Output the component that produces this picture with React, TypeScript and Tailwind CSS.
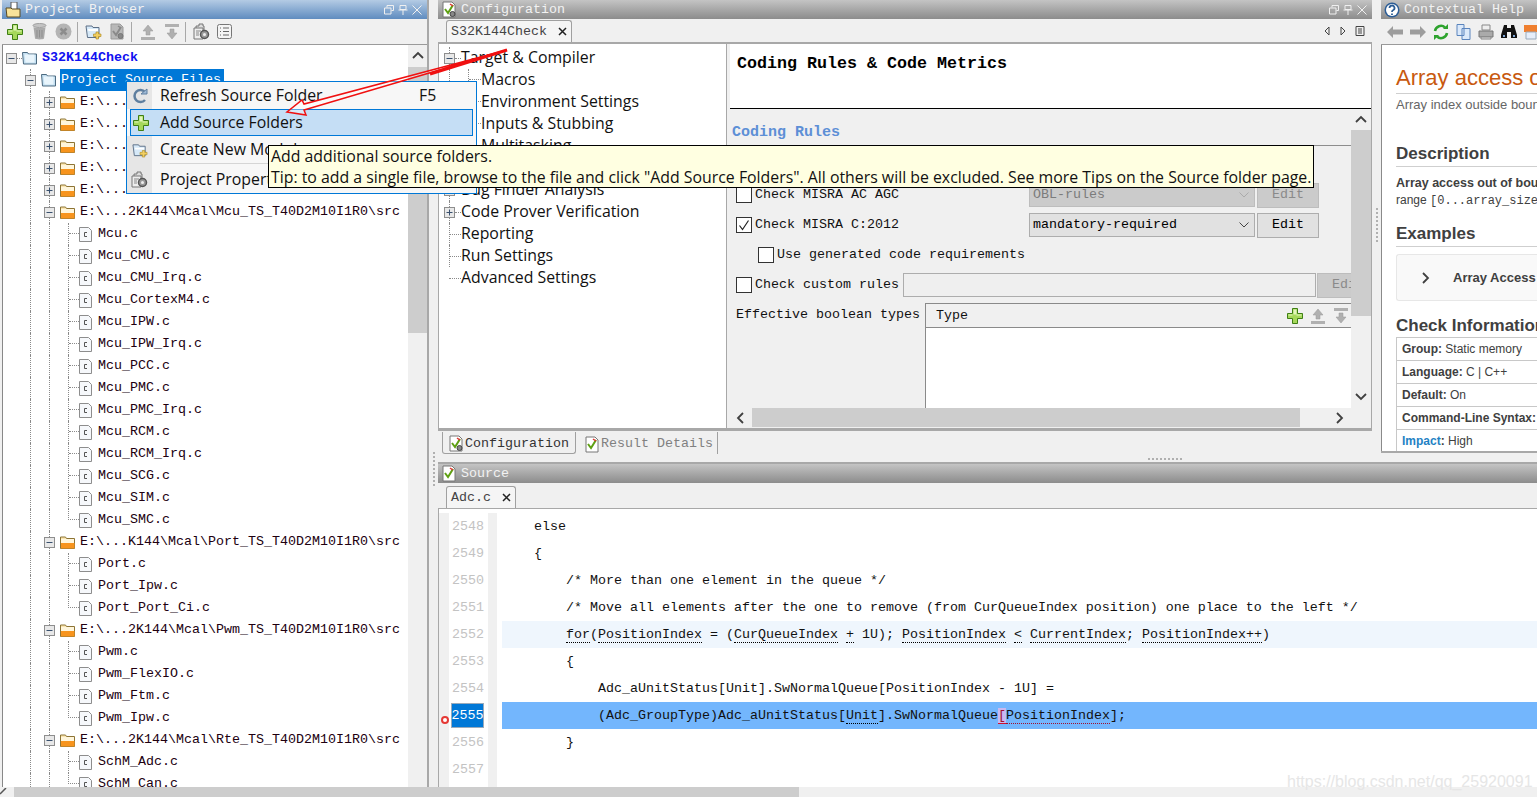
import React from "react";

const GUIDE = "border-dotted border-[#8a8a8a]";

const Plus = ({ s = 16 }: { s?: number }) => (
  <svg width={s} height={s} viewBox="0 0 16 16" className="shrink-0">
    <path d="M5.500 .5h5v5h5v5h-5v5h-5v-5h-5v-5h5z" fill="#a5d85a" stroke="#3f7f14" />
    <path d="M6.500 1.500h3v5h5v1h-5v-1h-3zM1.500 6.500h4v1h-4z" fill="#e2f5bd" />
  </svg>
);

const Trash = () => (
  <svg width="15" height="17" viewBox="0 0 15 17" className="shrink-0">
    <ellipse cx="7.500" cy="2.500" rx="6.500" ry="2" fill="#c4c4c4" stroke="#a0a0a0" />
    <path d="M1.500 4l1.500 11.500c1.500 1.200 7.500 1.200 9 0L13.500 4c-2 1.200-10 1.200-12 0z" fill="#aaa" />
    <path d="M5 7v7.500M7.500 7v7.500M10 7v7.500" stroke="#8f8f8f" />
  </svg>
);

const Cancel = () => (
  <svg width="17" height="17" viewBox="0 0 17 17" className="shrink-0">
    <circle cx="8.500" cy="8.500" r="8" fill="#b4b4b4" />
    <path d="M5.500 5.500l6 6M11.500 5.500l-6 6" stroke="#8c8c8c" strokeWidth="2.500" />
  </svg>
);

const FolderAdd = ({ s = 17 }: { s?: number }) => (
  <svg width={s} height={s} viewBox="0 0 17 17" className="shrink-0">
    <path d="M1 3h6l1 1.500h6v10H2.500z" fill="#d6e9f8" stroke="#5c6f86" />
    <path d="M3 6h10v2H3.500z" fill="#fff" />
    <path d="M11 9h2.500v2H16v2.500h-2.500V16H11v-2.500H8.500V11H11z" fill="#f2cf62" stroke="#a98519" strokeWidth=".6" />
  </svg>
);

const CheckDoc = ({ gray = false, gear = false }: { gray?: boolean; gear?: boolean }) => (
  <svg width="14" height="17" viewBox="0 0 14 17" className="shrink-0">
    <path d="M1 1h9l3 3v12H1z" fill={gray ? "#b8b8b8" : "#fff"} stroke={gray ? "#9a9a9a" : "#777"} />
    <path d="M3 8l3 4 5-8" fill="none" stroke={gray ? "#8a8a8a" : "#5ea012"} strokeWidth="2" />
    <path d="M8 3l3 2" stroke={gray ? "#8a8a8a" : "#d33"} strokeWidth="1.500" />
    {(gear || gray) && <circle cx="10.500" cy="13" r="2.500" fill="#888" stroke={gray ? "#777" : "#444"} />}
  </svg>
);

const ArrowUp = ({ s = 16 }: { s?: number }) => (
  <svg width={s} height={s} viewBox="0 0 16 16" className="shrink-0">
    <path d="M8 1l5 6h-3v4H6V7H3z" fill="#b0b0b0" stroke="#999" strokeWidth=".5" />
    <path d="M1 13h14v3H1z" fill="#b0b0b0" />
  </svg>
);

const ArrowDown = ({ s = 16 }: { s?: number }) => (
  <svg width={s} height={s} viewBox="0 0 16 16" className="shrink-0">
    <path d="M1 0h14v3H1z" fill="#b0b0b0" />
    <path d="M6 5h4v4h3l-5 6-5-6h3z" fill="#b0b0b0" stroke="#999" strokeWidth=".5" />
  </svg>
);

const GearDoc = () => (
  <svg width="17" height="17" viewBox="0 0 17 17" className="shrink-0">
    <path d="M3 3h3v-2h4v2h1v5H3z" fill="#ddd" stroke="#777" />
    <path d="M1 5h9v11H1z" fill="#eee" stroke="#777" />
    <path d="M3 8h5M3 10h3M3 12h3" stroke="#888" />
    <circle cx="11.500" cy="11.500" r="4" fill="#999" stroke="#555" strokeWidth="1.500" />
    <circle cx="11.500" cy="11.500" r="1.500" fill="#eee" />
  </svg>
);

const ListBox = () => (
  <svg width="15" height="15" viewBox="0 0 15 15" className="shrink-0">
    <rect x=".5" y=".5" width="14" height="14" rx="2" fill="#f4f4f4" stroke="#777" />
    <path d="M3 4h1M6 4h6M3 7.500h1M6 7.500h6M3 11h1M6 11h6" stroke="#666" />
  </svg>
);

const Sep = ({ className = "" }: { className?: string }) => (
  <span className={`h-[20px] w-px shrink-0 bg-[#a8a8a8] ${className}`} />
);

const ProjectFolder = () => (
  <svg width="15" height="14" viewBox="0 0 15 14" className="shrink-0">
    <path d="M.5 1.500h5l1 1.500h8v10h-13z" fill="#c4e0f2" stroke="#4c6a80" />
    <path d="M2.500 3.500h10v8h-9z" fill="#e9f5fc" />
  </svg>
);

const OpenFolder = () => (
  <svg width="15" height="13" viewBox="0 0 15 13" className="shrink-0">
    <path d="M.5 1h5l1 1.500h8v10H.500z" fill="#fbe6b0" stroke="#8d7434" />
    <path d="M1 7h13.500v5.500H1z" fill="#f7941d" />
    <path d="M1 3h13v4H1z" fill="#fff6dc" />
  </svg>
);

const FileC = () => (
  <svg width="13" height="15" viewBox="0 0 13 15" className="shrink-0">
    <path d="M.5 .5h9l3 3v11H.500z" fill="#f6f8fb" stroke="#8d8d8d" />
    <path d="M8 5.500H5.500v4H8" fill="none" stroke="#555" />
  </svg>
);

const Expander = ({ open = false, className = "" }: { open?: boolean; className?: string }) => (
  <svg width="11" height="11" viewBox="0 0 11 11" className={`shrink-0 ${className}`}>
    <rect x=".5" y=".5" width="10" height="10" fill="#e8e8e8" stroke="#8e8e8e" />
    <path d="M2.500 5.500h6" stroke="#39506e" />
    {!open && <path d="M5.500 2.500v6" stroke="#39506e" />}
  </svg>
);

const Chevron = ({ dir, className = "" }: { dir: "up" | "down" | "left" | "right"; className?: string }) => {
  const d = {
    up: "M2 9l5-5 5 5",
    down: "M2 5l5 5 5-5",
    left: "M9 2L4 7l5 5",
    right: "M5 2l5 5-5 5",
  }[dir];
  return (
    <svg width="14" height="14" viewBox="0 0 14 14" className={`shrink-0 ${className}`}>
      <path d={d} fill="none" stroke="#404040" strokeWidth="1.800" />
    </svg>
  );
};

const PaneButtons = () => (
  <span className="flex items-center gap-[4px] pr-[5px]">
    <svg width="10" height="10" viewBox="0 0 10 10">
      <path d="M3 2.500V.5h6.500v5H7.500M.5 3h6.500v6H.500z" fill="none" stroke="#f0f0f0" />
    </svg>
    <svg width="10" height="10" viewBox="0 0 10 10">
      <path d="M2 .5h6v4H2zM.5 5h9M5 5v5" fill="none" stroke="#f0f0f0" />
    </svg>
    <svg width="10" height="10" viewBox="0 0 10 10">
      <path d="M.5 .5l9 9M9.500 .5l-9 9" stroke="#f0f0f0" />
    </svg>
  </span>
);

const TitleBar = ({
  icon,
  title,
  buttons = true,
  active = false,
}: {
  icon: React.ReactNode;
  title: string;
  buttons?: boolean;
  active?: boolean;
}) => (
  <div
    className={`flex h-[19px] shrink-0 items-center justify-between bg-gradient-to-b ${
      active ? "from-[#b4cbe4] to-[#5f8cbf]" : "from-[#c4c4c4] to-[#8c8c8c]"
    }`}
  >
    <div className="flex items-center gap-[4px] pl-[3px] text-[13.33px] text-[#f2f2f2]">
      <span className="flex w-[16px] justify-center">{icon}</span>
      <span>{title}</span>
    </div>
    {buttons && <PaneButtons />}
  </div>
);

type Row =
  | { kind: "dir"; path: string; open?: boolean }
  | { kind: "file"; name: string; last?: boolean };

const files = (names: string[]): Row[] =>
  names.map((name, i) => ({ kind: "file", name, last: i === names.length - 1 }));

const treeRows: Row[] = [
  { kind: "dir", path: "E:\\..." },
  { kind: "dir", path: "E:\\..." },
  { kind: "dir", path: "E:\\..." },
  { kind: "dir", path: "E:\\..." },
  { kind: "dir", path: "E:\\..." },
  { kind: "dir", path: "E:\\...2K144\\Mcal\\Mcu_TS_T40D2M10I1R0\\src", open: true },
  ...files([
    "Mcu.c",
    "Mcu_CMU.c",
    "Mcu_CMU_Irq.c",
    "Mcu_CortexM4.c",
    "Mcu_IPW.c",
    "Mcu_IPW_Irq.c",
    "Mcu_PCC.c",
    "Mcu_PMC.c",
    "Mcu_PMC_Irq.c",
    "Mcu_RCM.c",
    "Mcu_RCM_Irq.c",
    "Mcu_SCG.c",
    "Mcu_SIM.c",
    "Mcu_SMC.c",
  ]),
  { kind: "dir", path: "E:\\...K144\\Mcal\\Port_TS_T40D2M10I1R0\\src", open: true },
  ...files(["Port.c", "Port_Ipw.c", "Port_Port_Ci.c"]),
  { kind: "dir", path: "E:\\...2K144\\Mcal\\Pwm_TS_T40D2M10I1R0\\src", open: true },
  ...files(["Pwm.c", "Pwm_FlexIO.c", "Pwm_Ftm.c", "Pwm_Ipw.c"]),
  { kind: "dir", path: "E:\\...2K144\\Mcal\\Rte_TS_T40D2M10I1R0\\src", open: true },
  ...files(["SchM_Adc.c", "SchM_Can.c"]),
];

const Guide = ({ w = "w-[19px]" }: { w?: string }) => (
  <span className={`h-full shrink-0 border-l ${GUIDE} ${w}`} />
);

const ProjectTreeRow = ({ row }: { row: Row }) => (
  <div className="flex h-[22px] shrink-0 items-center pl-[27px] text-[13.33px] text-[#200010] whitespace-nowrap">
    <Guide />
    {row.kind === "dir" ? (
      <>
        <span className={`relative flex h-full w-[11px] shrink-0 items-center border-l ${GUIDE}`}>
          <Expander open={row.open} className="absolute left-[-6px]" />
        </span>
        <OpenFolder />
        <span className="ml-[5px]">{row.path}</span>
      </>
    ) : (
      <>
        <Guide />
        {row.last ? (
          <span className={`h-[11px] w-[11px] shrink-0 self-start border-b border-l ${GUIDE}`} />
        ) : (
          <span className={`h-full w-[11px] shrink-0 border-l ${GUIDE}`}>
            <span className={`mt-[10px] block border-t ${GUIDE}`} />
          </span>
        )}
        <FileC />
        <span className="ml-[6px]">{row.name}</span>
      </>
    )}
  </div>
);

const ProjectBrowser = () => (
  <div className="flex h-full w-[429px] shrink-0 flex-col border-r-2 border-[#a8a8a8] pl-[2px]">
    <TitleBar
      active
      icon={
        <svg width="16" height="16" viewBox="0 0 16 16">
          <path d="M6 0h6v10H6z" fill="#fff" stroke="#555" />
          <path d="M1 6h5l1 1h8v8H2z" fill="#f8e39a" stroke="#5a4a20" />
        </svg>
      }
      title="Project Browser"
    />
    <div className="flex h-[26px] shrink-0 items-center border-b border-[#9a9a9a] bg-[#f0f0f0] pl-[5px]">
      <Plus />
      <span className="ml-[9px]">
        <Trash />
      </span>
      <span className="ml-[8px]">
        <Cancel />
      </span>
      <Sep className="ml-[5px]" />
      <span className="ml-[7px]">
        <FolderAdd />
      </span>
      <span className="ml-[8px]">
        <CheckDoc gray />
      </span>
      <Sep className="ml-[7px]" />
      <span className="ml-[8px]">
        <ArrowUp />
      </span>
      <span className="ml-[8px]">
        <ArrowDown />
      </span>
      <Sep className="ml-[5px]" />
      <span className="ml-[7px]">
        <GearDoc />
      </span>
      <span className="ml-[7px]">
        <ListBox />
      </span>
    </div>
    <div className="flex min-h-0 flex-1 border-l border-[#888]">
      <div className="flex min-w-0 flex-1 flex-col overflow-hidden bg-white pt-[2px]">
        <div className="flex h-[22px] shrink-0 items-center pl-[3px]">
          <Expander open />
          <span className={`w-[5px] border-t ${GUIDE}`} />
          <ProjectFolder />
          <span className="ml-[5px] text-[13.33px] font-bold text-[#1010f0]">S32K144Check</span>
        </div>
        <div className="flex h-[22px] shrink-0 items-center pl-[27px]">
          <span className={`relative flex h-full w-[11px] shrink-0 items-center border-l ${GUIDE}`}>
            <Expander open className="absolute left-[-6px]" />
          </span>
          <ProjectFolder />
          <span className="ml-[4px] bg-[#0078d7] pl-px pr-[3px] text-[13.33px] leading-[22px] text-white">
            Project Source Files
          </span>
        </div>
        {treeRows.map((row, i) => (
          <ProjectTreeRow key={i} row={row} />
        ))}
      </div>
      <div className="flex w-[19px] shrink-0 flex-col items-center bg-[#f0f0f0]">
        <div className="flex h-[22px] items-center">
          <Chevron dir="up" />
        </div>
        <div className="h-[266px] w-full bg-[#cdcdcd]" />
      </div>
    </div>
  </div>
);

const configTree: { label: string; level: number; expander?: "plus" | "minus" }[] = [
  { label: "Target & Compiler", level: 0, expander: "minus" },
  { label: "Macros", level: 1 },
  { label: "Environment Settings", level: 1 },
  { label: "Inputs & Stubbing", level: 1 },
  { label: "Multitasking", level: 1 },
  { label: "Coding Rules & Code Metrics", level: 0 },
  { label: "Bug Finder Analysis", level: 0, expander: "plus" },
  { label: "Code Prover Verification", level: 0, expander: "plus" },
  { label: "Reporting", level: 0 },
  { label: "Run Settings", level: 0 },
  { label: "Advanced Settings", level: 0 },
];

const ConfigTree = () => (
  <div className="w-[287px] shrink-0 bg-white pt-[3px] font-['Open_Sans',sans-serif] text-[15.85px] text-[#111]">
    {configTree.map((item, i) => (
      <div key={item.label} className="flex h-[22px] items-center pl-[10px] whitespace-nowrap">
        <span className={`relative flex h-full shrink-0 items-center ${item.level ? "w-[19px]" : "w-[12px]"} ${i < 10 ? `border-l ${GUIDE}` : ""}`}>
          {item.expander && <Expander open={item.expander === "minus"} className="absolute left-[-6px] bg-white" />}
          {!item.expander && !item.level && <span className={`w-full border-t ${GUIDE}`} />}
          {item.expander && <span className={`ml-[5px] w-full border-t ${GUIDE}`} />}
        </span>
        {item.level === 1 && (
          <span className={`h-full w-[13px] shrink-0 border-l ${GUIDE}`}>
            <span className={`mt-[10px] block border-t ${GUIDE}`} />
          </span>
        )}
        <span>{item.label}</span>
      </div>
    ))}
  </div>
);

const Checkbox = ({ checked = false }: { checked?: boolean }) => (
  <span className="flex h-[16px] w-[16px] shrink-0 items-center justify-center border border-[#333] bg-white">
    {checked && (
      <svg width="12" height="12" viewBox="0 0 12 12">
        <path d="M1.500 6.500l3 4 6-9" fill="none" stroke="#222" strokeWidth="1.200" />
      </svg>
    )}
  </span>
);

const Select = ({ value, disabled = false }: { value: string; disabled?: boolean }) => (
  <div
    className={`flex h-[24px] w-[226px] shrink-0 items-center justify-between border pl-[3px] pr-[4px] ${
      disabled ? "border-[#bdbdbd] bg-[#cbcbcb] text-[#7c7c7c]" : "border-[#adadad] bg-[#e1e1e1] text-black"
    }`}
  >
    <span>{value}</span>
    <svg width="12" height="8" viewBox="0 0 12 8">
      <path d="M1.500 1.500L6 6l4.500-4.500" fill="none" stroke={disabled ? "#aaa" : "#444"} />
    </svg>
  </div>
);

const EditBtn = ({ disabled = false }: { disabled?: boolean }) => (
  <div
    className={`ml-[2px] flex h-[25px] w-[62px] shrink-0 items-center justify-center border ${
      disabled ? "border-[#bdbdbd] bg-[#cbcbcb] text-[#8a8a8a]" : "border-[#adadad] bg-[#e1e1e1] text-black"
    }`}
  >
    Edit
  </div>
);

const OptionsPane = () => (
  <div className="flex min-h-0 flex-1 flex-col pb-px">
    <div className="flex min-h-0 flex-1">
      <div className="min-w-0 flex-1 overflow-hidden bg-[#f0f0f0] text-[13.33px] text-[#111] whitespace-nowrap">
        <div className="h-[36px] pl-[2px] pt-[14px] text-[15px] font-bold leading-[20px] text-[#5d8fd6]">Coding Rules</div>
        <div className="mb-[34px] border-b border-[#8d8d8d]" />
        <div className="flex h-[30px] items-center pl-[6px]">
          <Checkbox />
          <span className="ml-[3px] w-[274px] shrink-0">Check MISRA AC AGC</span>
          <Select value="OBL-rules" disabled />
          <EditBtn disabled />
        </div>
        <div className="flex h-[30px] items-center pl-[6px]">
          <Checkbox checked />
          <span className="ml-[3px] w-[274px] shrink-0">Check MISRA C:2012</span>
          <Select value="mandatory-required" />
          <EditBtn />
        </div>
        <div className="flex h-[30px] items-center pl-[28px]">
          <Checkbox />
          <span className="ml-[3px]">Use generated code requirements</span>
        </div>
        <div className="flex h-[30px] items-center pl-[6px]">
          <Checkbox />
          <span className="ml-[3px] w-[148px] shrink-0">Check custom rules</span>
          <div className="h-[24px] w-[413px] shrink-0 border border-[#adadad] bg-[#efefef]" />
          <div className="ml-px flex h-[25px] w-[62px] shrink-0 items-center justify-center border border-[#bdbdbd] bg-[#cbcbcb] text-[#8a8a8a]">
            Edit
          </div>
        </div>
        <div className="flex pl-[6px] pt-[3px]">
          <span className="w-[189px] shrink-0 pt-[2px]">Effective boolean types</span>
          <div className="h-[106px] min-w-0 flex-1 border-l border-t border-[#8a8a8a] bg-white">
            <div className="flex h-[24px] items-center justify-between border-b border-[#8a8a8a] bg-[#f0f0f0] pl-[10px]">
              <span>Type</span>
              <span className="flex items-center gap-[7px] pr-[2px]">
                <Plus />
                <ArrowUp />
                <ArrowDown />
              </span>
            </div>
          </div>
        </div>
      </div>
      <div className="flex w-[20px] shrink-0 flex-col items-center bg-[#f0f0f0]">
        <div className="flex h-[21px] items-center">
          <Chevron dir="up" />
        </div>
        <div className="h-[186px] w-full bg-[#cdcdcd]" />
        <div className="flex-1" />
        <div className="flex h-[24px] items-center">
          <Chevron dir="down" />
        </div>
      </div>
    </div>
    <div className="flex h-[19px] shrink-0 items-center bg-[#f0f0f0]">
      <div className="flex w-[22px] justify-center">
        <Chevron dir="left" />
      </div>
      <div className="h-full w-[548px] bg-[#cdcdcd]" />
      <div className="ml-[31px] flex w-[16px] justify-center">
        <Chevron dir="right" />
      </div>
    </div>
  </div>
);

const DocTab = ({ label, w }: { label: string; w: string }) => (
  <div className={`flex h-[22px] items-center justify-between rounded-t-[3px] border border-b-0 border-[#a0a0a0] bg-[#f5f5f5] pl-[4px] pr-[4px] text-[13.33px] text-[#444] ${w}`}>
    <span>{label}</span>
    <svg width="9" height="9" viewBox="0 0 9 9">
      <path d="M1 1l7 7M8 1l-7 7" stroke="#222" strokeWidth="1.500" />
    </svg>
  </div>
);

const Configuration = () => (
  <div className="flex h-full w-[934px] shrink-0 flex-col">
    <TitleBar icon={<CheckDoc gear />} title="Configuration" />
    <div className="flex h-[25px] shrink-0 items-end justify-between border-b-2 border-[#a8a8a8] bg-[#f0f0f0] pl-[8px]">
      <DocTab label="S32K144Check" w="w-[126px]" />
      <div className="flex items-center gap-[8px] self-center pr-[7px]">
        <svg width="8" height="10" viewBox="0 0 8 10">
          <path d="M6 1L2 5l4 4z" fill="none" stroke="#444" />
        </svg>
        <svg width="8" height="10" viewBox="0 0 8 10">
          <path d="M2 1l4 4-4 4z" fill="none" stroke="#444" />
        </svg>
        <svg width="10" height="10" viewBox="0 0 10 10">
          <path d="M1 .5h8v9H1zM3 3h4M3 5h4M3 7h4" fill="none" stroke="#444" />
        </svg>
      </div>
    </div>
    <div className="flex h-[387px] shrink-0 border-x border-b-[3px] border-[#a8a8a8] bg-[#b8b8b8]">
      <ConfigTree />
      <div className="flex min-w-0 flex-1 flex-col border-l border-[#a8a8a8] bg-[#f0f0f0] pl-[3px]">
        <div className="h-[65px] shrink-0 border-b border-black bg-white pl-[7px] pt-[7px] text-[16.67px] font-bold text-black">
          Coding Rules &amp; Code Metrics
        </div>
        <OptionsPane />
      </div>
    </div>
    <div className="flex flex-1 items-start bg-[#f0f0f0] pl-[4px] pt-px text-[13.33px]">
      <div className="flex h-[22px] w-[134px] items-center gap-[2px] rounded-b-[3px] border border-t-0 border-[#a0a0a0] pl-[6px] pt-[2px] text-[#333]">
        <CheckDoc gear />
        Configuration
      </div>
      <div className="ml-[8px] flex h-[22px] w-[134px] items-center gap-[2px] border-r border-[#a0a0a0] pl-[1px] pt-[2px] text-[#808080]">
        <CheckDoc />
        Result Details
      </div>
    </div>
  </div>
);

const helpCells: React.ReactNode[] = [
  <span><b>Group:</b> Static memory</span>,
  <span><b>Language:</b> C | C++</span>,
  <span><b>Default:</b> On</span>,
  <span><b>Command-Line Syntax:</b></span>,
  <span><b className="text-[#1f82c4]">Impact</b><b>:</b> High</span>,
];

const ContextualHelp = () => (
  <div className="flex h-[453px] min-w-0 flex-1 flex-col border-b-2 border-[#a8a8a8]">
    <TitleBar
      icon={
        <svg width="16" height="16" viewBox="0 0 16 16">
          <circle cx="8" cy="8" r="7.500" fill="#2c5d96" />
          <circle cx="8" cy="8" r="6" fill="#fff" />
          <path d="M5.500 6a2.500 2.500 0 1 1 3.500 2.300c-.7.3-1 .7-1 1.700M8 11.500v1.500" fill="none" stroke="#2c5d96" strokeWidth="1.800" />
        </svg>
      }
      title="Contextual Help"
      buttons={false}
    />
    <div className="flex h-[26px] shrink-0 items-center gap-[7px] border-b border-[#9a9a9a] bg-[#f0f0f0] pl-[6px]">
      <svg width="16" height="12" viewBox="0 0 16 12" className="shrink-0">
        <path d="M0 6l6-6v3.500h10v5H6V12z" fill="#9d9d9d" />
      </svg>
      <svg width="16" height="12" viewBox="0 0 16 12" className="shrink-0">
        <path d="M16 6l-6-6v3.500H0v5h10V12z" fill="#9d9d9d" />
      </svg>
      <svg width="16" height="16" viewBox="0 0 16 16" className="shrink-0">
        <path d="M2 7a6 6 0 0 1 10-3.500M14 9a6 6 0 0 1-10 3.500" fill="none" stroke="#2ea32e" strokeWidth="2.500" />
        <path d="M10 5h5V0zM6 11H1v5z" fill="#2ea32e" />
      </svg>
      <svg width="15" height="16" viewBox="0 0 15 16" className="shrink-0">
        <path d="M1 .5h7v11H1zM6 4.500h8v11H6z" fill="#dbe9fa" stroke="#5a84bd" />
      </svg>
      <svg width="16" height="16" viewBox="0 0 16 16" className="shrink-0">
        <path d="M4 1h8v5H4z" fill="#eee" stroke="#888" />
        <path d="M1 7h14v6H1z" fill="#aaa" stroke="#777" />
        <path d="M3 13h10v2H3z" fill="#ddd" stroke="#888" />
      </svg>
      <svg width="16" height="15" viewBox="0 0 16 15" className="shrink-0">
        <path d="M3 1h3v3h4V1h3l3 10v3h-6V8H6v6H0v-3z" fill="#111" />
        <path d="M2 11h2v2H2zM12 11h2v2h-2z" fill="#7fa7d8" />
      </svg>
      <svg width="14" height="16" viewBox="0 0 14 16" className="shrink-0">
        <path d="M0 1h14v7H0z" fill="#ef7f2f" />
        <path d="M2 8h10v7H2z" fill="#e6eefa" stroke="#9ab" />
      </svg>
    </div>
    <div className="min-h-0 flex-1 overflow-hidden border-l border-[#8a8a8a] bg-white pl-[14px] font-['Liberation_Sans',sans-serif] whitespace-nowrap text-[#404040]">
      <div className="mt-[19px] border-b border-[#cfcfcf] pb-[1px] text-[22px] leading-[28px] text-[#c8590f]">Array access out of bounds</div>
      <div className="mt-[1px] h-[36px] text-[13px] text-[#666]">Array index outside bounds</div>
      <div className="mt-[12px] border-b border-[#cfcfcf] pb-[1px] text-[17px] font-bold leading-[22px]">Description</div>
      <div className="mt-[8px] text-[12.5px] font-bold leading-[17px]">Array access out of bounds</div>
      <div className="text-[12px] leading-[17px]">
        range <span className="font-['Liberation_Mono',monospace]">[0...array_size-1]</span>
      </div>
      <div className="mt-[13px] border-b border-[#cfcfcf] pb-[1px] text-[17px] font-bold leading-[22px]">Examples</div>
      <div className="mt-[7px] flex h-[47px] items-center rounded-l-[3px] border border-r-0 border-[#e7e7e7] bg-[#f9f9f9] pl-[21px]">
        <Chevron dir="right" />
        <span className="ml-[21px] text-[13px] font-bold">Array Access</span>
      </div>
      <div className="mt-[14px] text-[17px] font-bold leading-[22px]">Check Information</div>
      <div className="border-l border-t border-[#c8c8c8] text-[12px]">
        {helpCells.map((cell, i) => (
          <div key={i} className="flex h-[23px] items-center border-b border-[#c8c8c8] pl-[5px]">
            {cell}
          </div>
        ))}
      </div>
    </div>
  </div>
);

const Dotted = ({ children }: { children: React.ReactNode }) => (
  <span className="border-b border-dotted border-[#000]">{children}</span>
);

const codeLines: { n: number; hl?: "soft" | "strong"; body: React.ReactNode }[] = [
  { n: 2548, body: "    else" },
  { n: 2549, body: "    {" },
  { n: 2550, body: "        /* More than one element in the queue */" },
  { n: 2551, body: "        /* Move all elements after the one to remove (from CurQueueIndex position) one place to the left */" },
  {
    n: 2552,
    hl: "soft",
    body: (
      <>
        {"        "}
        <Dotted>for</Dotted>(<Dotted>PositionIndex</Dotted> = (<Dotted>CurQueueIndex</Dotted> <Dotted>+</Dotted> 1U); <Dotted>PositionIndex</Dotted>{" "}
        <Dotted>&lt;</Dotted> <Dotted>CurrentIndex</Dotted>; <Dotted>PositionIndex++</Dotted>)
      </>
    ),
  },
  { n: 2553, body: "        {" },
  { n: 2554, body: "            Adc_aUnitStatus[Unit].SwNormalQueue[PositionIndex - 1U] =" },
  {
    n: 2555,
    hl: "strong",
    body: (
      <>
        {"            (Adc_GroupType)Adc_aUnitStatus["}
        <Dotted>Unit</Dotted>
        {"].SwNormalQueue"}
        <span className="border-b border-[#d01030] bg-[#c9b8f0] text-[#a01030]">[</span>
        <span className="border-b border-dotted border-[#a01030]">PositionIndex</span>
        {"];"}
      </>
    ),
  },
  { n: 2556, body: "        }" },
  { n: 2557, body: "" },
];

const SourcePane = () => (
  <div className="flex min-h-0 flex-1 flex-col text-[13.33px]">
    <div className="border-t-2 border-[#a8a8a8]">
      <TitleBar icon={<CheckDoc />} title="Source" buttons={false} />
    </div>
    <div className="flex h-[26px] shrink-0 items-end border-b border-[#a8a8a8] bg-[#f0f0f0] pl-[8px]">
      <DocTab label="Adc.c" w="w-[70px]" />
    </div>
    <div className="flex min-h-0 flex-1 overflow-hidden border-l border-[#a8a8a8] bg-white pt-[4px]">
      <div className="relative flex w-[10px] shrink-0 flex-col bg-[#f0f0f0]">
        <span className="absolute left-[2px] top-[203px] h-[8px] w-[8px] rounded-full border-2 border-[#e53935] bg-white" />
      </div>
      <div className="w-[39px] shrink-0 bg-white">
        {codeLines.map((l) => (
          <div key={l.n} className="flex h-[27px] items-center justify-end pr-[4px]">
            <span
              className={
                l.hl === "strong"
                  ? "flex h-[25px] w-[33px] items-center justify-center border border-[#9ab] bg-[#0078d7] text-white"
                  : "text-[#c3c3c3]"
              }
            >
              {l.n}
            </span>
          </div>
        ))}
      </div>
      <div className="w-[9px] shrink-0 bg-[#f0f0f0]" />
      <div className="w-[5px] shrink-0" />
      <div className="min-w-0 flex-1">
        {codeLines.map((l) => (
          <div
            key={l.n}
            className={`flex h-[27px] items-center whitespace-pre text-[#111] ${
              l.hl === "soft" ? "bg-[#eff6fd]" : l.hl === "strong" ? "bg-[#73b6fd]" : ""
            }`}
          >
            <span>{l.body}</span>
          </div>
        ))}
      </div>
    </div>
  </div>
);

const ContextMenu = () => (
  <div className="absolute left-[126px] top-[81px] flex h-[113px] w-[351px] flex-col border border-[#0078d7] bg-[#f7f7f7] font-['Open_Sans',sans-serif] text-[15.85px] text-[#111]">
    <div className="flex h-[27px] shrink-0 items-center">
      <span className="flex h-full w-[25px] items-center justify-center bg-[#e6e6e6]">
        <svg width="16" height="16" viewBox="0 0 16 16">
          <path d="M13 4A6 6 0 1 0 13 12" fill="none" stroke="#5f7f9f" strokeWidth="2.500" />
          <path d="M9 6h6V1z" fill="#9fbad6" stroke="#5f7f9f" />
        </svg>
      </span>
      <span className="ml-[8px] w-[259px] shrink-0">Refresh Source Folder</span>
      <span>F5</span>
    </div>
    <div className="mx-[3px] flex h-[27px] shrink-0 items-center border border-[#0078d7] bg-[#c5def5]">
      <span className="flex w-[20px] justify-center">
        <Plus />
      </span>
      <span className="ml-[9px]">Add Source Folders</span>
    </div>
    <div className="flex h-[27px] shrink-0 items-center">
      <span className="flex h-full w-[25px] items-center justify-center bg-[#e6e6e6]">
        <FolderAdd s={16} />
      </span>
      <span className="ml-[8px] whitespace-nowrap">Create New Module</span>
    </div>
    <div className="flex h-[3px] shrink-0">
      <span className="h-full w-[25px] bg-[#e6e6e6]" />
      <span className="ml-[8px] h-px flex-1 bg-[#d5d5d5]" />
    </div>
    <div className="flex flex-1 items-center">
      <span className="flex h-full w-[25px] items-center justify-center bg-[#e6e6e6]">
        <GearDoc />
      </span>
      <span className="ml-[8px] whitespace-nowrap">Project Properties</span>
    </div>
  </div>
);

const Tooltip = () => (
  <div className="absolute left-[268px] top-[145px] h-[43px] w-[1046px] border border-black bg-[#ffffe1] pl-[2px] font-['Open_Sans',sans-serif] text-[15.85px] leading-[21px] text-[#111] whitespace-nowrap">
    <div>Add additional source folders.</div>
    <div>
      Tip: to add a single file, browse to the file and click "Add Source Folders". All others will be excluded. See more Tips on the Source folder page.
    </div>
  </div>
);

export default function App() {
  return (
    <div className="relative flex h-[797px] w-[1537px] flex-col overflow-hidden bg-[#f0f0f0] font-['Liberation_Mono',monospace]">
      <div className="flex min-h-0 flex-1">
        <ProjectBrowser />
        <div className="ml-[9px] flex min-w-0 flex-1 flex-col">
          <div className="flex h-[462px] shrink-0">
            <Configuration />
            <div className="w-[9px] shrink-0" />
            <ContextualHelp />
          </div>
          <SourcePane />
        </div>
      </div>
      <div className="flex h-[10px] shrink-0 items-center bg-[#f0f0f0]">
        <div className="flex w-[14px] justify-start">
          <svg width="7" height="8" viewBox="0 0 7 8">
            <path d="M0 6l3-3M3 3l3-3" stroke="#555" strokeWidth="1.500" />
          </svg>
        </div>
        <div className="h-full w-[785px] bg-[#cdcdcd]" />
      </div>

      <ContextMenu />
      <Tooltip />

      <svg width="240" height="80" viewBox="0 0 240 80" className="absolute left-[280px] top-[44px]">
        <path d="M227 6L24 60l-2-4-15 12 19 3-2-5z" fill="#fff" fillOpacity="0.35" stroke="#f01010" strokeWidth="1.500" />
        <path d="M227 6L150 30" stroke="#f01010" strokeWidth="3" />
      </svg>

      {/* splitter grips */}
      <span className="absolute left-[1148px] top-[458px] w-[34px] border-t-2 border-dotted border-[#b0b0b0]" />
      <span className="absolute left-[1376px] top-[208px] h-[34px] border-l-2 border-dotted border-[#b0b0b0]" />
      <span className="absolute left-[433px] top-[452px] h-[34px] border-l-2 border-dotted border-[#b0b0b0]" />

      <span className="absolute left-[1287px] top-[770px] font-['Liberation_Sans',sans-serif] text-[16px] text-[#e6e6e6]">
        https://blog.csdn.net/qq_25920091
      </span>
    </div>
  );
}
